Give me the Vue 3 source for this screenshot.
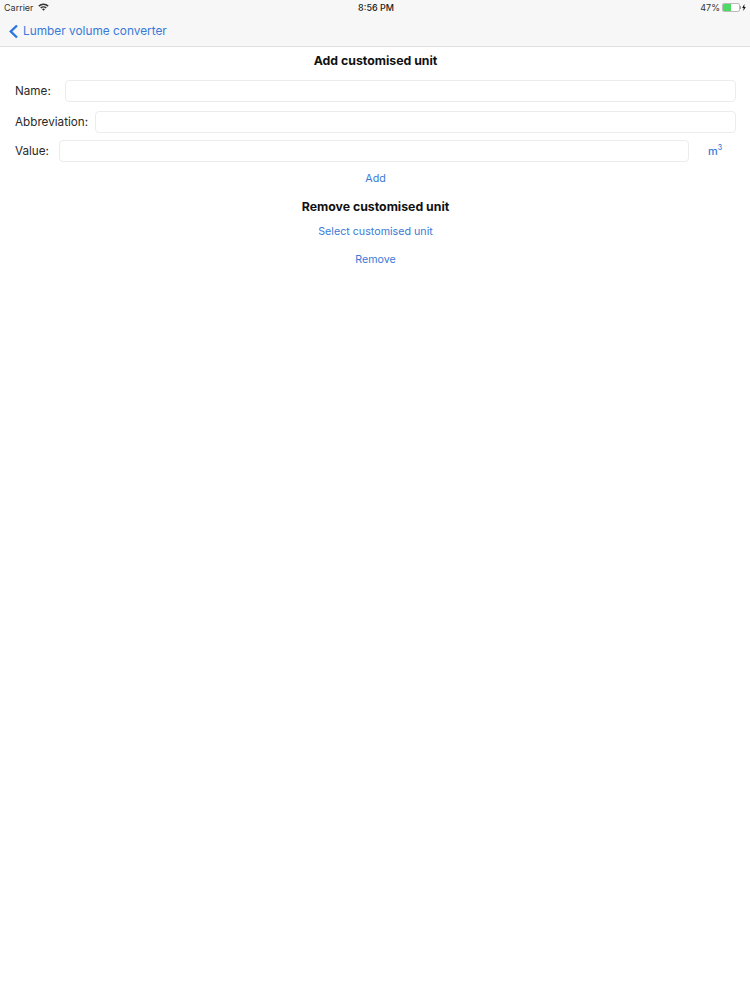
<template>
  <div class="screen">
    <header class="topBar">
      <div class="status">
        <div class="statusLeft">
          <span>Carrier</span>
          <svg class="wifi" width="11" height="8" viewBox="0 0 11 8">
            <path d="M0.3 2.6a7.4 7.4 0 0 1 10.4 0L9.6 3.7a5.8 5.8 0 0 0-8.2 0z" />
            <path d="M2.2 4.5a4.7 4.7 0 0 1 6.6 0L7.7 5.6a3.1 3.1 0 0 0-4.4 0z" />
            <path d="M4 6.3a2.1 2.1 0 0 1 3 0L5.5 7.8z" />
          </svg>
        </div>
        <span class="time">8:56 PM</span>
        <div class="statusRight">
          <span>47%</span>
          <span class="battery"><span class="batteryLevel" :style="{ width: batteryLevel + '%' }"></span></span>
          <span class="batteryNub"></span>
          <svg class="bolt" width="4" height="7" viewBox="0 0 4 7"><path d="M2.4 0 0.2 3.9h1.4L1.3 7l2.5-4H2.3z" fill="#111" /></svg>
        </div>
      </div>
      <nav class="nav">
        <svg class="chevron" width="11" height="15" viewBox="0 0 11 15">
          <path d="M9 1.5 2.8 7.5 9 13.5" fill="none" stroke="#2a76dc" stroke-width="2.4" />
        </svg>
        <span>Lumber volume converter</span>
      </nav>
    </header>

    <main class="content">
      <h2 class="heading addHeading">Add customised unit</h2>
      <div v-for="row in rows" :key="row.label" class="row" :class="row.cls">
        <label class="label">{{ row.label }}:</label>
        <input class="field" type="text" />
        <a v-if="row.unit" class="unit">m<sup>3</sup></a>
      </div>
      <a class="link addLink">Add</a>

      <h2 class="heading removeHeading">Remove customised unit</h2>
      <a class="link selectLink">Select customised unit</a>
      <a class="link removeLink">Remove</a>
    </main>
  </div>
</template>

<script setup>
const batteryLevel = 47

const rows = [
  { label: 'Name', cls: 'nameRow' },
  { label: 'Abbreviation', cls: 'abbrRow' },
  { label: 'Value', cls: 'valueRow', unit: true }
]
</script>

<style scoped>
.screen {
  min-height: 1000px;
  background: #fff;
  font-family: Inter, "Liberation Sans", sans-serif;
  color: #1a1a1a;
}

.topBar {
  height: 47px;
  box-sizing: border-box;
  background: #f7f7f8;
  border-bottom: 1px solid #dfdfe1;
}

.status {
  display: grid;
  grid-template-columns: 1fr auto 1fr;
  align-items: center;
  height: 14px;
  padding: 0 4px;
  font-size: 9px;
  color: #333;
}

.statusLeft {
  display: flex;
  align-items: center;
  gap: 4px;
}

.wifi {
  fill: #333;
}

.time {
  font-weight: 500;
  color: #222;
  margin-left: 2px;
}

.statusRight {
  display: flex;
  align-items: center;
  justify-content: flex-end;
  gap: 2px;
}

.battery {
  width: 16px;
  height: 7px;
  border: 1px solid #bbb;
  border-radius: 2px;
  background: #fff;
  overflow: hidden;
}

.batteryLevel {
  display: block;
  height: 100%;
  background: #4cd964;
}

.batteryNub {
  width: 1px;
  height: 3px;
  margin-left: -2px;
  margin-right: -1px;
  background: #999;
}

.nav {
  display: flex;
  align-items: center;
  gap: 4px;
  height: 34px;
  padding-left: 8px;
  font-size: 11.85px;
  color: #3a7ad6;
}

.content {
  display: flex;
  flex-direction: column;
  padding: 0 14px 0 15px;
}

.heading {
  margin: 0;
  height: 26px;
  line-height: 26px;
  text-align: center;
  font-size: 12.3px;
  font-weight: 700;
  color: #111;
}

.addHeading {
  margin-top: 1px;
  margin-bottom: 6px;
}

.row {
  display: flex;
  align-items: center;
  gap: 7px;
  height: 22px;
  margin-bottom: 7px;
}

.nameRow {
  margin-bottom: 9px;
}

.label {
  font-size: 11.7px;
  color: #2a2a2a;
}

.nameRow .label {
  margin-right: 7px;
}

.valueRow .label {
  margin-right: 3px;
}

.field {
  flex: 1;
  min-width: 0;
  height: 22px;
  box-sizing: border-box;
  padding: 0 6px;
  border: 1px solid #ececee;
  border-radius: 4px;
  background: #fff;
  outline: none;
}

.unit {
  width: 38px;
  margin-right: 2px;
  text-align: center;
  font-size: 11px;
  font-weight: 500;
  color: #3a7ad6;
}

.unit sup {
  font-size: 7px;
  line-height: 0;
}

.link {
  align-self: center;
  font-size: 10.7px;
  line-height: 16px;
  color: #3a7ad6;
}

.addLink {
  margin-top: 2px;
}

.removeHeading {
  margin-top: 7px;
}

.selectLink {
  margin-top: 4px;
}

.removeLink {
  margin-top: 12px;
}
</style>
